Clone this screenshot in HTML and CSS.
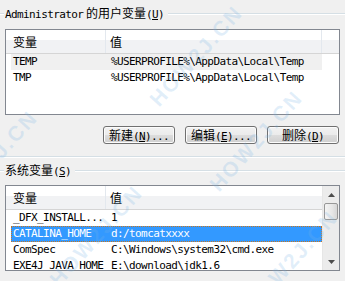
FILE: index.html
```html
<!DOCTYPE html>
<html>
<head>
<meta charset="utf-8">
<link rel="stylesheet" href="styles.css">
</head>
<body>
<div class="page">
  <div class="group-title">
    <span class="gline short"></span>
    <span class="glabel"><span class="mono">Administrator</span> 的用户变量<span class="mono">(<u>U</u>)</span></span>
    <span class="gline"></span>
  </div>

  <div class="list">
    <div class="header">
      <div class="hcell c1">变量</div>
      <div class="hcell c2">值</div>
      <div class="hcell c3"></div>
    </div>
    <div class="rows">
      <div class="row soft"><span class="cell c1">TEMP</span><span class="cell c2">%USERPROFILE%\AppData\Local\Temp</span></div>
      <div class="row"><span class="cell c1">TMP</span><span class="cell c2">%USERPROFILE%\AppData\Local\Temp</span></div>
    </div>
  </div>

  <div class="buttons">
    <button class="btn">新建<span class="mono">(<u>N</u>)...</span></button>
    <button class="btn">编辑<span class="mono">(<u>E</u>)...</span></button>
    <button class="btn">删除<span class="mono">(<u>D</u>)</span></button>
  </div>

  <div class="group-end"></div>

  <div class="group-title second">
    <span class="gline short"></span>
    <span class="glabel">系统变量<span class="mono">(<u>S</u>)</span></span>
    <span class="gline"></span>
  </div>

  <div class="list list2">
    <div class="main">
      <div class="header">
        <div class="hcell c1">变量</div>
        <div class="hcell c2">值</div>
      </div>
      <div class="rows">
        <div class="row"><span class="cell c1">_DFX_INSTALL...</span><span class="cell c2">1</span></div>
        <div class="row sel"><span class="cell c1">CATALINA_HOME</span><span class="cell c2">d:/tomcatxxxx</span></div>
        <div class="row"><span class="cell c1">ComSpec</span><span class="cell c2">C:\Windows\system32\cmd.exe</span></div>
        <div class="row"><span class="cell c1">EXE4J_JAVA_HOME</span><span class="cell c2">E:\download\jdk1.6</span></div>
      </div>
    </div>
    <div class="scrollbar">
      <div class="arrow"><svg width="7" height="4" viewBox="0 0 7 4"><path d="M3.5 0 L7 4 L0 4 Z" fill="#4d4d4d"/></svg></div>
      <div class="thumb"></div>
      <div class="track"></div>
      <div class="arrow"><svg width="7" height="4" viewBox="0 0 7 4"><path d="M0 0 L7 0 L3.5 4 Z" fill="#4d4d4d"/></svg></div>
    </div>
  </div>
</div>

<div class="wm w1">HOW2J.CN</div>
<div class="wm w2">HOW2J.CN</div>
<div class="wm w3">HOW2J.CN</div>
<div class="wm w4">HOW2J.CN</div>
<div class="wm w5">HOW2J.CN</div>
</body>
</html>
```

FILE: styles.css
```css
html, body {
  margin: 0;
  padding: 0;
  background: #f0f0f0;
  width: 345px;
  height: 281px;
  overflow: hidden;
}

body {
  position: relative;
  font-family: "Noto Sans CJK SC", "DejaVu Sans Mono", sans-serif;
  font-size: 12px;
  color: #000;
}

.page {
  padding-top: 6px;
}

.mono {
  font-family: "DejaVu Sans Mono", monospace;
  font-size: 11px;
  letter-spacing: -0.6px;
}

u {
  text-decoration: underline;
  text-underline-offset: 1px;
}

.group-title {
  display: flex;
  align-items: center;
  height: 16px;
}

.gline {
  flex: 1;
  height: 1px;
  border-bottom: 1px solid #fff;
  background: #d5dfe5;
}

.gline.short {
  flex: 0 0 4px;
}

.glabel {
  padding: 0 4px 0 1px;
  line-height: 16px;
  white-space: nowrap;
}

.group-title.second {
  margin-top: 5px;
}

.list {
  margin: 7px 0 0 5px;
  width: 333px;
  height: 84px;
  border: 1px solid #828790;
  background: #fff;
  overflow: hidden;
}

.header {
  display: flex;
  height: 23px;
  border-bottom: 1px solid #d5d5d5;
  background: linear-gradient(#ffffff 0, #ffffff 10px, #f1f2f4 10px, #f1f2f4 100%);
}

.hcell {
  box-sizing: border-box;
  line-height: 23px;
  white-space: nowrap;
}

.hcell.c1 {
  width: 100px;
  padding-left: 7px;
  border-right: 1px solid #e3e8ee;
}

.hcell.c2 {
  width: 216px;
  padding-left: 4px;
  border-right: 1px solid #e3e8ee;
}

.hcell.c3 {
  flex: 1;
}

.rows {
  padding-left: 5px;
}

.row {
  display: flex;
  width: 311px;
  height: 16px;
  box-sizing: border-box;
  font-family: "DejaVu Sans Mono", monospace;
  font-size: 11px;
  letter-spacing: -0.6px;
  line-height: 16px;
  white-space: nowrap;
}

.row.soft {
  background: #f0f0f0;
}

.row.sel {
  background: #3399ff;
  color: #fff;
  outline: 1px dotted #c9761e;
  outline-offset: -1px;
}

.cell.c1 {
  width: 95px;
  padding-left: 2px;
  box-sizing: border-box;
  overflow: hidden;
}

.cell.c2 {
  padding-left: 5px;
}

.list2 {
  display: flex;
  margin-top: 6px;
}

.main {
  width: 316px;
}

.list2 .hcell.c2 {
  flex: 1;
  border-right: none;
}

.scrollbar {
  width: 17px;
  display: flex;
  flex-direction: column;
  background: #ececec;
  border-left: 1px solid #e6e6e6;
  box-sizing: border-box;
}

.arrow {
  height: 17px;
  display: flex;
  align-items: center;
  justify-content: center;
}

.thumb {
  margin: 0 1px;
  height: 15px;
  border: 1px solid #979797;
  border-radius: 2px;
  background: linear-gradient(90deg, #f4f4f4, #e6e6e6 60%, #d6d6d6);
}

.track {
  flex: 1;
}

.buttons {
  display: flex;
  justify-content: flex-end;
  gap: 10px;
  margin: 11px 6px 0 0;
}

.btn {
  width: 72px;
  height: 18px;
  padding: 0;
  border: 1px solid #707070;
  border-radius: 3px;
  background: linear-gradient(#f2f2f2 0, #ebebeb 50%, #dddddd 50%, #cfcfcf 100%);
  font-family: "Noto Sans CJK SC", sans-serif;
  font-size: 12px;
  line-height: 16px;
  color: #000;
  box-shadow: inset 0 0 0 1px #fcfcfc;
}

.group-end {
  margin-top: 12px;
  height: 1px;
  background: #d5dfe5;
  border-bottom: 1px solid #fff;
}

.wm {
  position: absolute;
  font-family: "Liberation Sans", sans-serif;
  font-weight: bold;
  font-size: 21px;
  letter-spacing: 2px;
  color: rgba(120, 180, 230, 0.22);
  transform: rotate(-48deg);
  transform-origin: 0 0;
  white-space: nowrap;
  pointer-events: none;
}

.w1 { left: 145px; top: 95px; }
.w2 { left: -60px; top: 200px; }
.w3 { left: 205px; top: 180px; }
.w4 { left: 45px; top: 275px; }
.w5 { left: 240px; top: 300px; }
```
